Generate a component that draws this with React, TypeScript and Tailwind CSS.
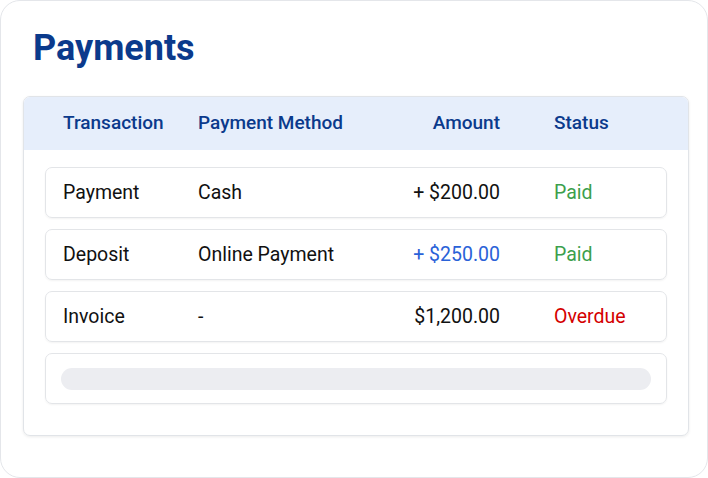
export default function App() {
  const rows = [
    { t: "Payment", m: "Cash", a: "+ $200.00", ac: "text-[#111]", s: "Paid", sc: "text-[#3c9f4c]" },
    { t: "Deposit", m: "Online Payment", a: "+ $250.00", ac: "text-[#2a62d8]", s: "Paid", sc: "text-[#3c9f4c]" },
    { t: "Invoice", m: "-", a: "$1,200.00", ac: "text-[#111]", s: "Overdue", sc: "text-[#d40000]" },
  ];
  return (
    <div className="w-[708px] h-[478px] bg-white" style={{ fontFamily: "Roboto, 'Liberation Sans', sans-serif" }}>
      <div className="w-[708px] h-[478px] rounded-[20px] border border-[#e4e6ea] pt-[26px] px-[22px]">
        <h1 className="ml-[10px] text-[36px] leading-[42px] font-bold text-[#0b3a8c]">Payments</h1>
        <div className="mt-[27px] w-[666px] rounded-[7px] border border-[#e1e4e8] shadow-[0_1px_3px_rgba(0,0,0,0.08)] overflow-hidden">
          <div className="h-[53px] bg-[#e6eefb] flex items-center pl-[39px] text-[19px] font-medium text-[#0b3a8c]">
            <div className="w-[135px]">Transaction</div>
            <div className="w-[180px]">Payment Method</div>
            <div className="w-[122px] text-right">Amount</div>
            <div className="ml-[54px]">Status</div>
          </div>
          <div className="px-[21px] pt-[17px] pb-[31px] flex flex-col gap-[11px]">
            {rows.map((r) => (
              <div key={r.t} className="h-[51px] rounded-[7px] border border-[#e3e5e8] shadow-[0_1px_2px_rgba(0,0,0,0.05)] flex items-center pl-[17px] text-[19.5px] text-[#111]">
                <div className="w-[135px]">{r.t}</div>
                <div className="w-[180px]">{r.m}</div>
                <div className={"w-[122px] text-right " + r.ac}>{r.a}</div>
                <div className={"ml-[54px] " + r.sc}>{r.s}</div>
              </div>
            ))}
            <div className="h-[51px] rounded-[7px] border border-[#e3e5e8] shadow-[0_1px_2px_rgba(0,0,0,0.05)] flex items-center px-[15px]">
              <div className="h-[22px] w-full rounded-full bg-[#ecedf1]" />
            </div>
          </div>
        </div>
      </div>
    </div>
  );
}
